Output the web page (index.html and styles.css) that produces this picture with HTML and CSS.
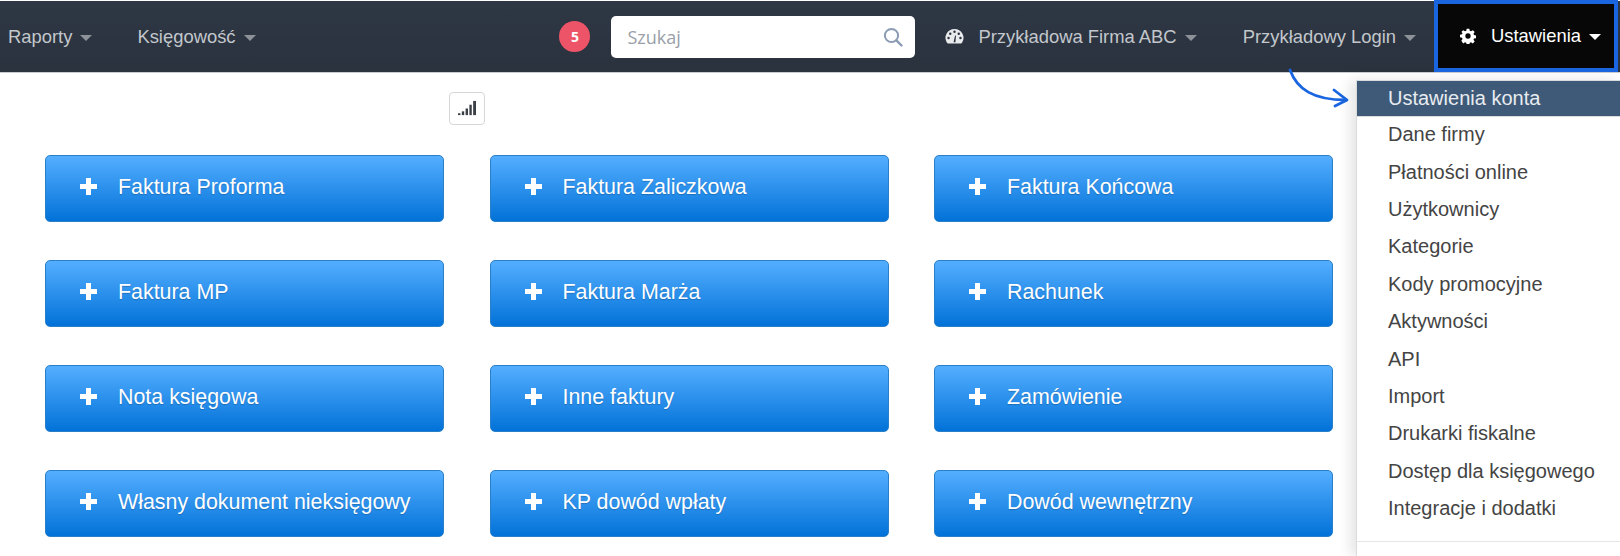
FILE: index.html
```html
<!DOCTYPE html>
<html lang="pl">
<head>
<meta charset="utf-8">
<title>Ustawienia</title>
<link rel="stylesheet" href="styles.css">
</head>
<body>
<header class="navbar">
  <nav class="nav-left">
    <a class="nav-link">Raporty <span class="caret"></span></a>
    <a class="nav-link">Księgowość <span class="caret"></span></a>
  </nav>
  <div class="nav-right">
    <span class="badge">5</span>
    <div class="search">
      <span class="search-text">Szukaj</span>
      <svg class="search-icon" viewBox="0 0 20 20"><circle cx="8.5" cy="8.5" r="6.6" fill="none" stroke="#8a9bb3" stroke-width="2"/><path d="M13.4 13.4 18.5 18.5" stroke="#8a9bb3" stroke-width="2.4" stroke-linecap="round"/></svg>
    </div>
    <a class="nav-link company">
      <svg class="gauge" viewBox="0 0 20 18"><path fill="#e8eaec" d="M10 1a9.5 9.5 0 0 0-8 14.6c.3.5.8.7 1.300.7h13.400c.5 0 1-.2 1.300-.7A9.500 9.500 0 0 0 10 1z"/><g fill="#2b3440"><circle cx="10" cy="4" r="1.300"/><circle cx="5.500" cy="6" r="1.300"/><circle cx="14.500" cy="6" r="1.300"/><circle cx="3.700" cy="10.500" r="1.300"/><circle cx="16.300" cy="10.500" r="1.300"/><path d="M9 15l1.600-7 1 .3-.6 6.700h-2z"/></g></svg>
      Przykładowa Firma ABC <span class="caret"></span>
    </a>
    <a class="nav-link login">Przykładowy Login <span class="caret"></span></a>
    <a class="settings">
      <svg class="gear" viewBox="0 0 24 24"><path fill="#fff" fill-rule="evenodd" d="M10 1h4l.6 3.200 1.900.8L19.200 3.200l2.800 2.800-1.800 2.700.8 1.900 3 .6v4l-3 .6-.8 1.900 1.800 2.700-2.800 2.800-2.700-1.800-1.900.8-.6 3h-4l-.6-3-1.900-.8-2.700 1.800L2 19.200l1.800-2.700-.8-1.900-3-.6v-4l3-.6.8-1.900L2 6l2.800-2.800 2.700 1.800 1.900-.8zM12 8a4 4 0 1 0 0 8 4 4 0 0 0 0-8z"/></svg>
      Ustawienia <span class="caret caret-white"></span>
    </a>
  </div>
</header>

<main class="content">
  <div class="toolbar">
    <button class="signal-btn" type="button" aria-label="Statystyki">
      <svg viewBox="0 0 20 18" class="signal"><g fill="#3a3f46"><rect x="0" y="14" width="2.500" height="2"/><rect x="4" y="12" width="2.500" height="4"/><rect x="8" y="9" width="2.500" height="7"/><rect x="12" y="5" width="2.500" height="11"/><rect x="16" y="1" width="3" height="15"/></g></svg>
    </button>
  </div>
  <div class="grid">
    <a class="doc-btn"><span class="plus"></span>Faktura Proforma</a>
    <a class="doc-btn"><span class="plus"></span>Faktura Zaliczkowa</a>
    <a class="doc-btn"><span class="plus"></span>Faktura Końcowa</a>
    <a class="doc-btn"><span class="plus"></span>Faktura MP</a>
    <a class="doc-btn"><span class="plus"></span>Faktura Marża</a>
    <a class="doc-btn"><span class="plus"></span>Rachunek</a>
    <a class="doc-btn"><span class="plus"></span>Nota księgowa</a>
    <a class="doc-btn"><span class="plus"></span>Inne faktury</a>
    <a class="doc-btn"><span class="plus"></span>Zamówienie</a>
    <a class="doc-btn"><span class="plus"></span>Własny dokument nieksięgowy</a>
    <a class="doc-btn"><span class="plus"></span>KP dowód wpłaty</a>
    <a class="doc-btn"><span class="plus"></span>Dowód wewnętrzny</a>
  </div>
</main>

<svg class="arrow" viewBox="0 0 60 40"><path d="M1 1C8 20 24 31 57 31" fill="none" stroke="#1a66e0" stroke-width="2.800" stroke-linecap="round"/><path d="M45 21l13 10-12 6" fill="none" stroke="#1a66e0" stroke-width="2.800" stroke-linecap="round" stroke-linejoin="round"/></svg>

<ul class="menu">
  <li class="menu-item active">Ustawienia konta</li>
  <li class="menu-item">Dane firmy</li>
  <li class="menu-item">Płatności online</li>
  <li class="menu-item">Użytkownicy</li>
  <li class="menu-item">Kategorie</li>
  <li class="menu-item">Kody promocyjne</li>
  <li class="menu-item">Aktywności</li>
  <li class="menu-item">API</li>
  <li class="menu-item">Import</li>
  <li class="menu-item">Drukarki fiskalne</li>
  <li class="menu-item">Dostęp dla księgowego</li>
  <li class="menu-item">Integracje i dodatki</li>
  <li class="menu-divider"></li>
</ul>
</body>
</html>
```

FILE: styles.css
```css
* { box-sizing: border-box; }
html, body { margin: 0; padding: 0; width: 1620px; height: 556px; overflow: hidden; background: #fff; }
body { font-family: "Liberation Sans", Arial, sans-serif; position: relative; }

.navbar {
  display: flex;
  justify-content: space-between;
  align-items: center;
  height: 72px;
  margin-top: 1px;
  background: #2b3440;
  background-image: linear-gradient(#2e3744, #29323d);
  border-bottom: 1px solid #c9ccd0;
}
.nav-left { display: flex; align-items: center; padding-left: 8px; gap: 45px; }
.nav-right { display: flex; align-items: center; height: 100%; }
.nav-link { color: #c3c7cc; font-size: 18.400px; white-space: nowrap; display: flex; align-items: center; }
.caret {
  display: inline-block;
  width: 0; height: 0;
  margin-left: 8px;
  margin-top: 2px;
  border-left: 6.500px solid transparent;
  border-right: 6.500px solid transparent;
  border-top: 6px solid #8d9298;
}
.caret-white { border-top-color: #fff; margin-left: 8px; }

.badge {
  width: 31px; height: 31px;
  border-radius: 50%;
  background: #ee5468;
  color: #fff;
  font-family: "Open Sans", sans-serif;
  font-size: 14px;
  font-weight: bold;
  display: flex; align-items: center; justify-content: center;
  margin-right: 21px;
}
.search {
  width: 304px; height: 42px;
  background: #fff;
  border-radius: 5px;
  display: flex; align-items: center; justify-content: space-between;
  padding: 0 12px 0 16px;
  margin-right: 30px;
}
.search-text { color: #9aa0a8; font-family: "Open Sans", sans-serif; font-size: 18px; }
.search-icon { width: 20px; height: 20px; }

.gauge { width: 19px; height: 17px; margin-right: 14px; }
.company { margin-right: 46px; }
.login { margin-right: 18px; }
.settings {
  width: 184px; height: 72px;
  margin-top: -1px;
  background: #070707;
  border: 4px solid #1a66e0;
  color: #fff;
  font-size: 18.400px;
  display: flex; align-items: center;
  padding-left: 22px;
  margin-right: 2px;
}
.gear { width: 16px; height: 16px; margin-right: 15px; }

.content { position: relative; }
.toolbar { display: flex; padding: 19px 0 0 449px; }
.signal-btn {
  width: 36px; height: 33px;
  padding: 0;
  background: #fff;
  border: 1px solid #d5d7da;
  border-radius: 4px;
  display: flex; align-items: center; justify-content: center;
}
.signal { width: 19px; height: 17px; }

.grid {
  display: grid;
  grid-template-columns: repeat(3, 399px);
  column-gap: 45.500px;
  row-gap: 37.500px;
  padding: 29.500px 0 0 45px;
}
.doc-btn {
  height: 67.500px;
  display: flex; align-items: center;
  padding: 0 0 2px 34px;
  color: #fff;
  font-size: 21.400px;
  text-shadow: 0 1px 1px rgba(0,0,0,.2);
  border: 1px solid #2a80c8;
  border-radius: 5px;
  background: linear-gradient(#54aeff, #0272d8);
  white-space: nowrap;
}
.plus {
  width: 17px; height: 17px;
  margin-right: 21px;
  margin-bottom: 1px;
  background:
    linear-gradient(#fff, #fff) center / 17px 5px no-repeat,
    linear-gradient(#fff, #fff) center / 5px 17px no-repeat;
}

.arrow { position: absolute; left: 1289px; top: 69px; width: 60px; height: 40px; overflow: visible; }

.menu {
  position: absolute;
  left: 1356px; top: 80px;
  width: 264px; height: 476px;
  margin: 0; padding: 0;
  list-style: none;
  background: #fff;
  border-left: 1px solid #d9dbdd;
  box-shadow: -6px 0 12px rgba(0,0,0,.1);
}
.menu-item {
  height: 37.400px;
  display: flex; align-items: center;
  padding-left: 31px;
  color: #444;
  font-size: 20px;
  white-space: nowrap;
}
.menu-item.active {
  height: 37px;
  margin-bottom: -1px;
  background: #3e5a78;
  color: #e8ecf0;
  border-top: 1px solid #d8dcdf;
  border-bottom: 1px solid #d8dcdf;
}
.menu-divider { height: 1px; background: #e6e6e6; margin-top: 14px; }
```
